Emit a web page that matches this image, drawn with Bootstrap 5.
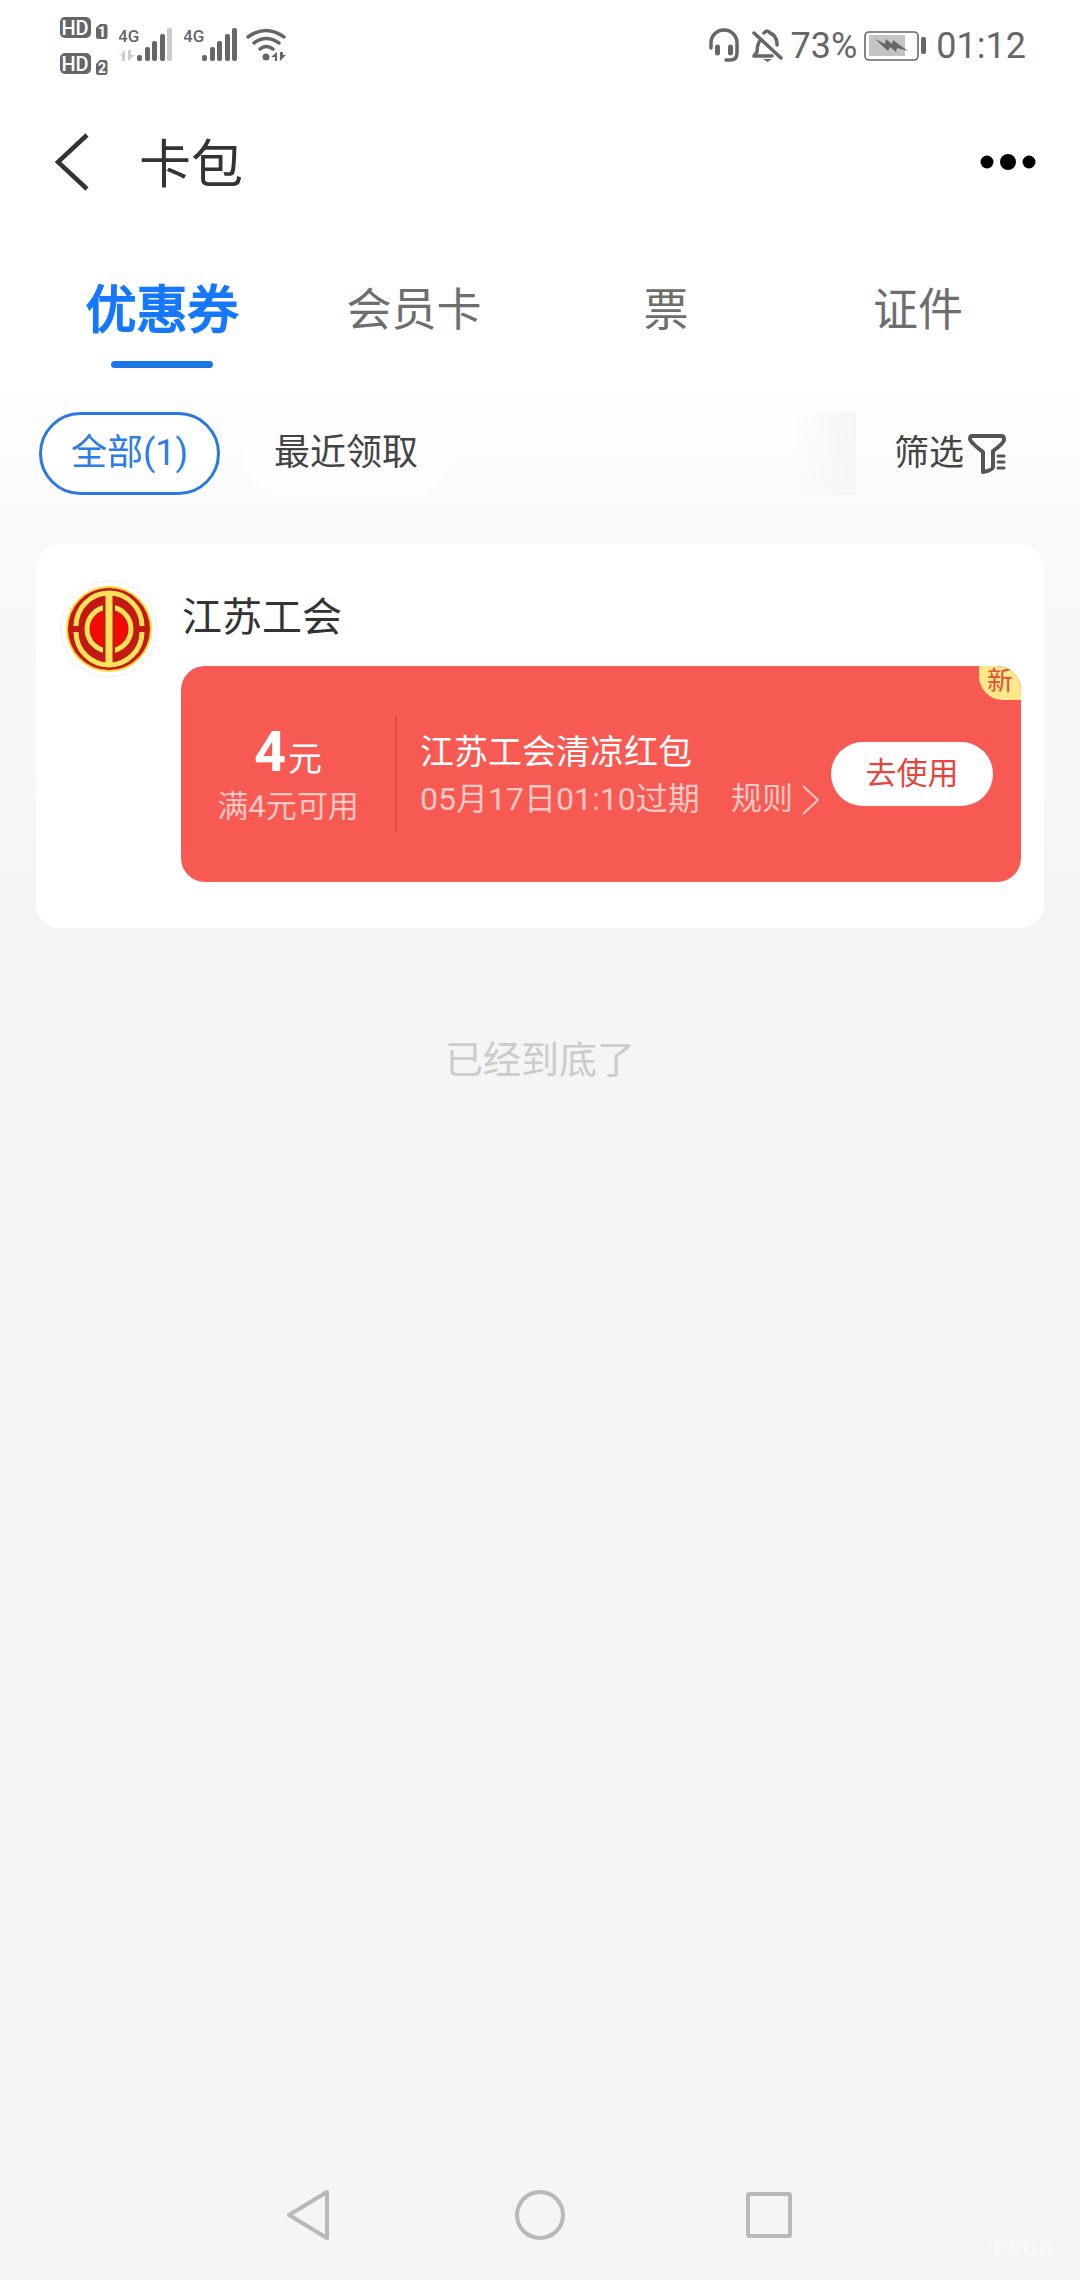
<!DOCTYPE html>
<html lang="zh-CN">
<head>
<meta charset="utf-8">
<meta name="viewport" content="width=device-width, initial-scale=1">
<title>卡包</title>
<link href="https://cdn.jsdelivr.net/npm/bootstrap@5.3.0/dist/css/bootstrap.min.css" rel="stylesheet">
<style>
  body { font-family: Roboto, "Noto Sans CJK SC", sans-serif; color: #333; background: #f5f5f5; }
  svg { display: block; flex: none; }
  .btn { --bs-btn-font-family: inherit; border-radius: 0; }
  .screen { background: linear-gradient(#fff 370px, #f9f9f9 550px, #f5f5f5 900px); }
  .statusbar { height: 88px; padding: 0 54px 0 60px; color: #666; font-size: 36px; line-height: 84px; }
  .statusbar span { padding-top: 4px; }
  .statusbar svg { fill: #666; stroke: none; }
  .statusbar .ln { fill: none; stroke: #666; stroke-linecap: round; stroke-linejoin: round; }
  .statusbar .dim { fill: #ccc; }
  .appbar { height: 150px; padding: 0 43px 0 48px; }
  .appbar h1 { font-size: 52px; line-height: 64px; font-weight: 400; margin-left: 43px; padding-top: 6px; }
  .tabs { padding: 0 36px; }
  .tabs a { color: #6e6e6e; font-size: 45px; line-height: 60px; padding: 43px 0 0; text-decoration: none; }
  .tabs a.active { color: #1677ff; font-size: 51px; -webkit-text-stroke: 2px #1677ff; }
  .tabs a.active::after { content: ""; display: block; width: 102px; height: 7px; margin: 20px auto 0; border-radius: 4px; background: #1d76e5; }
  .filters { padding: 44px 74px 49px 39px; gap: 22px; }
  .pill { height: 83px; padding: 0 29px; border: 3px solid transparent; border-radius: 42px; background: #fdfdfd; color: #444; font-size: 36px; line-height: 77px; }
  .pill.on { border-color: #2b79e0; color: #2b7de9; background: #fff; }
  .fade-edge { width: 64px; height: 83px; background: linear-gradient(90deg, rgba(245,245,245,0), #f6f6f6); margin-right: 16px; }
  .sift { font-size: 35px; line-height: 83px; color: #444; }
  .wallet { margin: 0 36px; padding: 36px 23px 46px 24px; border-radius: 24px; background: #fff; gap: 23px; }
  .shop { font-size: 40px; line-height: 60px; font-weight: 400; margin: 8px 0 18px 1px; }
  .coupon { position: relative; height: 216px; border-radius: 24px; background: #f75a53; color: #fff; padding-right: 28px; overflow: hidden; }
  .worth { width: 214px; }
  .worth .sum { font-size: 34px; line-height: 58px; padding-top: 4px; }
  .worth strong { font-size: 56px; font-weight: 700; margin-right: 2px; }
  .worth .soft { line-height: 38px; padding-bottom: 3px; }
  .soft { color: #ffc8c4; font-size: 31px; line-height: 44px; }
  .rule { width: 2px; height: 116px; background: #e24b46; }
  .detail { padding-left: 23px; }
  .detail .what { font-size: 34px; line-height: 50px; }
  .detail a { text-decoration: none; }
  .detail .when { font-size: 32px; }
  .use { width: 162px; height: 64px; border-radius: 32px; background: #fff; color: #e5463f; font-size: 31px; line-height: 60px; padding: 0; }
  .fresh { position: absolute; top: 0; right: 0; width: 42px; height: 34px; border-radius: 0 24px 0 24px; background: #fbe888; color: #e0503a; font-size: 26px; line-height: 30px; text-align: center; }
  .ending { color: #ccc; font-size: 38px; line-height: 56px; margin-top: 104px; }
  .navkeys { height: 130px; }
  .keyrow { gap: 178px; }
  .navkeys svg { fill: none; stroke: #b9b9b9; stroke-width: 4; stroke-linejoin: round; }
  .stamp { position: absolute; right: 24px; bottom: 18px; color: #fcfcfc; font-size: 17px; line-height: 26px; }
</style>
</head>
<body>
<div class="screen min-vh-100 d-flex flex-column">
  <div class="statusbar d-flex align-items-center">
    <svg width="48" height="88" viewBox="60 0 48 88" font-family="Roboto, sans-serif" font-weight="700">
      <rect x="60" y="17" width="31" height="21" rx="5"/><rect x="60" y="53" width="31" height="21" rx="5"/>
      <g fill="#fff" font-size="20" font-weight="500" text-anchor="middle"><text x="75" y="35">HD</text><text x="75" y="71">HD</text></g>
      <path d="M96 28l4-4h5q2.500 0 2.500 2.500v10q0 2.500-2.500 2.500h-6.500q-2.500 0-2.500-2.500zM96 64l4-4h5q2.500 0 2.500 2.500v10q0 2.500-2.500 2.500h-6.500q-2.500 0-2.500-2.500z"/>
      <g fill="#fff" font-size="14" text-anchor="middle"><text x="102" y="37">1</text><text x="102" y="73">2</text></g>
    </svg>
    <svg width="54" height="88" viewBox="119 0 54 88" style="margin-left:11px">
      <text x="118" y="42" font-size="17" font-weight="500">4G</text>
      <path class="dim" d="M119 56l6-6v11h-3v-6zM128 50v11l7-6h-4v-5z"/>
      <rect x="137" y="55" width="5" height="6" rx="2"/><rect x="145" y="47" width="5" height="14" rx="2"/><rect x="152" y="41" width="5" height="20" rx="2"/><rect x="160" y="34" width="5" height="27" rx="2"/><rect class="dim" x="167" y="28" width="5" height="33" rx="2"/>
    </svg>
    <svg width="54" height="88" viewBox="184 0 54 88" style="margin-left:11px">
      <text x="183" y="42" font-size="17" font-weight="500">4G</text>
      <rect x="202" y="55" width="5" height="6" rx="2"/><rect x="210" y="47" width="5" height="14" rx="2"/><rect x="217" y="41" width="5" height="20" rx="2"/><rect x="225" y="34" width="5" height="27" rx="2"/><rect x="232" y="28" width="5" height="33" rx="2"/>
    </svg>
    <svg width="42" height="88" viewBox="246 0 42 88" style="margin-left:8px">
      <g class="ln" stroke-width="3.500"><path d="M248 37q18-13 36 0M254 43q12-9 25 0M260 49q6-5 13 0"/></g>
      <circle cx="266" cy="57" r="3.500"/><path d="M271 57l6-5v9h-2v-4zM280 52v9l6-6h-3v-3z"/>
    </svg>
    <svg class="ms-auto" width="32" height="88" viewBox="708 0 32 88">
      <g class="ln" stroke-width="3.500"><path d="M711 48V43a13 13 0 0 1 26 0V53q0 7-7 7H726"/><path stroke-width="5" d="M717.500 47v6M730.500 47v6"/></g>
    </svg>
    <svg width="34" height="88" viewBox="751 0 34 88" style="margin-left:11px">
      <g class="ln" stroke-width="3.500"><path d="M754 33l27 25M777 45v-2q-1-8-7-10-3-4-6 0M759 42q-2 4-2 10l-3 4h18"/></g>
      <path d="M763 59h9l-4.500 3z"/>
    </svg>
    <span style="margin-left:6px">73%</span>
    <svg width="63" height="88" viewBox="865 0 63 88" style="margin-left:7px">
      <rect class="ln" x="866" y="32" width="53" height="28" rx="4" stroke-width="1.600"/>
      <rect x="870" y="35" width="36" height="21" style="fill:#c4c4c4"/>
      <path d="M876 39l10 5 1-5 6 5 1-4 15 11-11-3-1 4-6-5-2 4z"/><rect x="922" y="37" width="5" height="17" rx="2"/>
    </svg>
    <span style="margin-left:9px">01:12</span>
  </div>

  <header class="appbar d-flex align-items-center">
    <button class="btn p-0 border-0" type="button" aria-label="返回">
      <svg width="48" height="60" viewBox="48 132 48 60" fill="none" stroke="#333" stroke-width="4.500"><path d="M87 134L58 161L87 188"/></svg>
    </button>
    <h1 class="mb-0">卡包</h1>
    <button class="btn p-0 border-0 ms-auto" type="button" aria-label="更多">
      <svg width="58" height="20" viewBox="979 152 58 20"><circle cx="987" cy="161" r="6.500"/><circle cx="1008" cy="161" r="8"/><circle cx="1029" cy="161" r="6.500"/></svg>
    </button>
  </header>

  <nav class="tabs row g-0 text-center">
    <a class="col active" href="#" aria-current="page">优惠券</a>
    <a class="col" href="#">会员卡</a>
    <a class="col" href="#">票</a>
    <a class="col" href="#">证件</a>
  </nav>

  <div class="filters d-flex align-items-center">
    <button class="btn pill on" type="button">全部(1)</button>
    <button class="btn pill" type="button">最近领取</button>
    <div class="fade-edge ms-auto"></div>
    <button class="btn sift p-0 border-0 d-flex align-items-center gap-1" type="button">筛选
      <svg width="38" height="42" viewBox="0 0 38 42" fill="none" stroke="#555" stroke-width="4" stroke-linejoin="round" stroke-linecap="round"><path d="M4 3h29q3 0 3 3v1q0 3-11 11v16q0 3-10 5V19Q2 9 2 6t2-3z"/><path stroke-width="3" d="M30 23h6M30 29h6M30 35h6"/></svg>
    </button>
  </div>

  <main>
    <section class="wallet d-flex align-items-start">
      <svg width="98" height="98" viewBox="-49 -49 98 98">
        <circle r="48" fill="#fff" stroke="#f3eeee"/><circle r="43" fill="#ffd83a"/><circle r="41" fill="#c21a10"/>
        <g fill="none" stroke="#fbe25a" stroke-width="5"><path d="M-33-3A33 33 0 0 1 33-3M-33 3A33 33 0 0 0 33 3"/><circle r="22"/></g>
        <circle r="18.500" fill="#f40a04"/><rect x="-6" y="-31" width="12" height="62" fill="#c21a10"/><rect x="-3.500" y="-34" width="7" height="68" fill="#fbe25a"/>
      </svg>
      <div class="flex-grow-1">
        <h2 class="shop">江苏工会</h2>
        <div class="coupon d-flex align-items-center">
          <div class="worth text-center">
            <div class="sum"><strong>4</strong>元</div>
            <div class="soft">满4元可用</div>
          </div>
          <div class="rule"></div>
          <div class="detail flex-grow-1">
            <div class="what">江苏工会清凉红包</div>
            <div class="soft d-flex align-items-center">
              <span class="when">05月17日01:10过期</span>
              <a class="soft d-flex align-items-center ms-auto" href="#">规则
                <svg width="38" height="32" viewBox="0 0 38 32" fill="none" stroke="#ffc8c4" stroke-width="2"><path d="M10 3L25 17L10 31"/></svg>
              </a>
            </div>
          </div>
          <button class="btn use border-0" type="button">去使用</button>
          <span class="fresh">新</span>
        </div>
      </div>
    </section>
    <p class="ending text-center">已经到底了</p>
  </main>

  <footer class="navkeys mt-auto position-relative d-flex justify-content-center align-items-center">
    <div class="keyrow d-flex align-items-center">
      <svg width="50" height="54" viewBox="0 0 50 54"><path d="M4 27L42 4V50z"/></svg>
      <svg width="54" height="54" viewBox="0 0 54 54"><circle cx="27" cy="27" r="23"/></svg>
      <svg width="50" height="54" viewBox="0 0 50 54"><rect x="3" y="6" width="42" height="42" rx="1"/></svg>
    </div>
    <span class="stamp">卡农社区</span>
  </footer>
</div>
<script src="https://cdn.jsdelivr.net/npm/bootstrap@5.3.0/dist/js/bootstrap.bundle.min.js"></script>
</body>
</html>
